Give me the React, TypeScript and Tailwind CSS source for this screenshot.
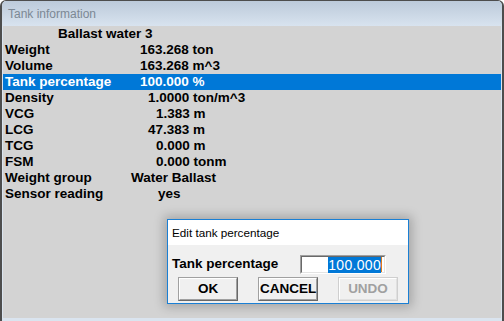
import React from "react";

type Row = { label: string; value: string; pad: string; hl?: boolean };

const rows: Row[] = [
  { label: "Weight", value: "163.268 ton", pad: "pl-[9px]" },
  { label: "Volume", value: "163.268 m^3", pad: "pl-[9px]" },
  { label: "Tank percentage", value: "100.000 %", pad: "pl-[9px]", hl: true },
  { label: "Density", value: "1.0000 ton/m^3", pad: "pl-[17px]" },
  { label: "VCG", value: "1.383 m", pad: "pl-[25px]" },
  { label: "LCG", value: "47.383 m", pad: "pl-[17px]" },
  { label: "TCG", value: "0.000 m", pad: "pl-[25px]" },
  { label: "FSM", value: "0.000 tonm", pad: "pl-[25px]" },
  { label: "Weight group", value: "Water Ballast", pad: "pl-[0px]" },
  { label: "Sensor reading", value: "yes", pad: "pl-[27px]" },
];

function Btn({ children, disabled }: { children: React.ReactNode; disabled?: boolean }) {
  return (
    <div
      className={
        disabled
          ? "w-[60px] h-[24px] border border-[#cfcfcf] flex"
          : "w-[60px] h-[24px] border border-t-[#a0a0a0] border-l-[#a0a0a0] border-b-[#696969] border-r-[#696969] flex"
      }
    >
      <div
        className={
          disabled
            ? "flex-1 border border-t-white border-l-white border-b-[#e0e0e0] border-r-[#e0e0e0] bg-[#f0f0f0] flex items-center justify-center text-[#a0a0a0]"
            : "flex-1 border border-t-white border-l-white border-b-[#a0a0a0] border-r-[#a0a0a0] bg-[#f0f0f0] flex items-center justify-center text-black"
        }
      >
        {children}
      </div>
    </div>
  );
}

export default function App() {
  return (
    <div className="w-[504px] h-[321px] bg-white overflow-hidden relative font-['Liberation_Sans',Arial,sans-serif]">
      <div className="w-[504px] h-[321px] bg-[#dae4ef] border-t border-l-2 border-r-2 border-[#4d4d4d] rounded-t-[6px] flex flex-col overflow-hidden">
        <div className="h-[25px] shrink-0 bg-gradient-to-b from-[#bccada] to-[#d8e3ef] pl-[6px] flex items-center text-[12px] text-[#7c8894]">
          Tank information
        </div>
        <div className="flex-1 ml-[1px] mr-[1px] mb-[3px] bg-[#d3d3d3] text-[13.5px] font-bold leading-[16px] text-black">
          <div className="h-4 pl-[55px]">Ballast water 3</div>
          {rows.map((r) => (
            <div
              key={r.label}
              className={r.hl ? "h-4 flex bg-[#0078d7] text-white" : "h-4 flex"}
            >
              <span className="w-[128px] shrink-0 pl-[2px] whitespace-nowrap">{r.label}</span>
              <span className={r.pad + " whitespace-nowrap"}>{r.value}</span>
            </div>
          ))}
        </div>
      </div>

      <div className="absolute left-[167px] top-[219px] w-[242px] h-[85px] border border-[#1a7fd4] bg-[#f0f0f0] shadow-[0_0_10px_3px_rgba(0,0,0,0.22)] flex flex-col">
        <div className="h-[25px] shrink-0 bg-white pl-[4px] flex items-center text-[11.7px] text-black">
          Edit tank percentage
        </div>
        <div className="flex-1 flex flex-col text-[13.5px] font-bold">
          <div className="mt-[10px] h-[19px] flex items-center">
            <span className="w-[132px] pl-[4px] shrink-0">Tank percentage</span>
            <div className="w-[86px] h-[19px] border border-t-[#a0a0a0] border-l-[#a0a0a0] border-b-white border-r-white flex">
              <div className="flex-1 bg-white border border-t-[#696969] border-l-[#696969] border-b-[#e3e3e3] border-r-[#e3e3e3] flex items-center justify-end pr-[2px]">
                <span className="bg-[#0078d7] text-white font-normal text-[14px] leading-[16px] tracking-[0.3px]">100.000</span>
                <span className="w-[1px] h-[15px] bg-[#e07b1a]" />
              </div>
            </div>
          </div>
          <div className="mt-[3px] pl-[10px] flex gap-[20px]">
            <Btn>OK</Btn>
            <Btn>CANCEL</Btn>
            <Btn disabled>UNDO</Btn>
          </div>
        </div>
      </div>
    </div>
  );
}
